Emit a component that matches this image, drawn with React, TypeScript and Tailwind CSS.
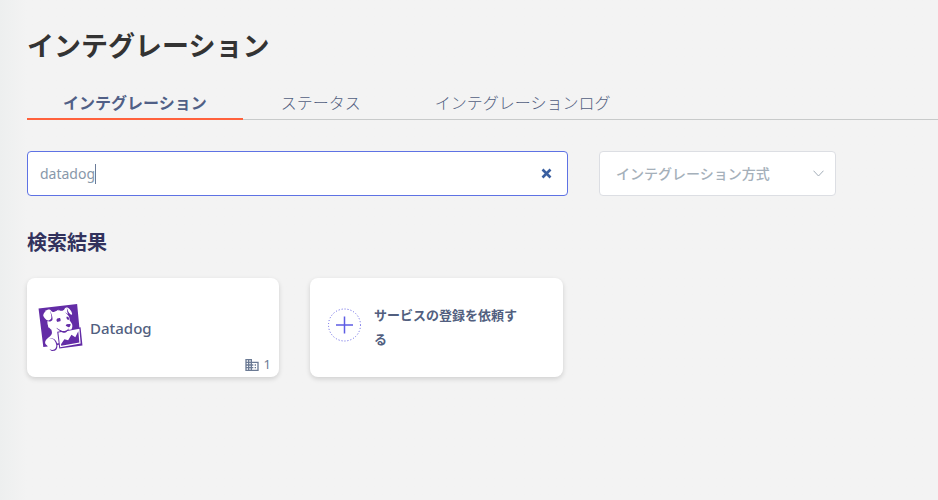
import React, { useState } from 'react';
import { SiDatadog } from 'react-icons/si';
import { MdBusiness } from 'react-icons/md';

const tabs = ['インテグレーション', 'ステータス', 'インテグレーションログ'];

const TabBar: React.FC = () => {
  const [active, setActive] = useState(0);

  return (
    <div role="tablist" className="mt-6 flex gap-0.5 border-b border-[#c8caca]">
      {tabs.map((tab, idx) => (
        <button
          key={tab}
          role="tab"
          aria-selected={idx === active}
          onClick={() => setActive(idx)}
          className={
            idx === active
              ? '-mb-px h-8 border-b-2 border-[#ff613c] px-9 text-base leading-6 font-bold text-[#505f86]'
              : '-mb-px h-8 border-b-2 border-transparent px-9 text-base leading-6 font-light text-[#525f7f]'
          }
        >
          {tab}
        </button>
      ))}
    </div>
  );
};

const SearchBox: React.FC = () => {
  const [query, setQuery] = useState('datadog');

  return (
    <div className="relative w-[541px]">
      <input
        type="text"
        aria-label="検索"
        value={query}
        onChange={(e) => setQuery(e.target.value)}
        className="h-[45px] w-full rounded border border-[#5e72e4] bg-white px-3 text-sm text-[#8898aa] caret-transparent outline-none"
      />
      {/* caret sits right after the typed text */}
      <div aria-hidden="true" className="pointer-events-none absolute inset-y-0 left-[13px] flex items-center">
        <span className="invisible text-sm whitespace-pre">{query}</span>
        <span className="h-5 w-px bg-[#6b7c99]" />
      </div>
      <button
        aria-label="クリア"
        onClick={() => setQuery('')}
        className="absolute inset-y-0 right-4 flex items-center text-[#3a5fa0]"
      >
        <svg width="11" height="11" viewBox="0 0 11 11" fill="none" stroke="currentColor" strokeWidth="2.6">
          <path d="M1.5 1.5 9.5 9.5M9.5 1.5 1.5 9.5" />
        </svg>
      </button>
    </div>
  );
};

const MethodSelect: React.FC = () => (
  <div className="relative w-[237px]">
    <select
      aria-label="インテグレーション方式"
      className="h-[45px] w-full appearance-none rounded border border-[#dcdee3] bg-white pr-8 pl-4 text-sm font-medium text-[#a5b0ba] outline-none"
    >
      <option>インテグレーション方式</option>
    </select>
    <svg
      className="pointer-events-none absolute top-[19px] right-3 text-[#a3adb8]"
      width="11"
      height="7"
      viewBox="0 0 11 7"
      fill="none"
      stroke="currentColor"
    >
      <path d="M.5.7 5.5 6 10.5.7" />
    </svg>
  </div>
);

export default function App() {
  return (
    <div className="min-h-screen bg-[#f3f3f3] bg-linear-to-r from-[#edefef] to-[#f3f3f3] to-[27px] pt-7 pl-[27px] font-['Noto_Sans','Noto_Sans_CJK_JP',sans-serif]">
      <h1 className="text-[27px] leading-9 font-bold text-[#333333]">インテグレーション</h1>
      <TabBar />

      <div className="mt-[31px] flex gap-[31px]">
        <SearchBox />
        <MethodSelect />
      </div>

      <h2 className="mt-8 text-xl leading-[30px] font-bold text-[#32325d]">検索結果</h2>

      <div className="mt-5 flex gap-[31px]">
        <a href="#datadog" className="flex h-[99px] w-[252px] flex-col rounded-lg bg-white pr-2 pl-2.5 shadow-[0_2px_5px_rgba(0,0,0,0.15)]">
          <div className="flex grow items-center gap-1.5 pt-6">
            <SiDatadog className="size-[47px] text-[#632ca6]" />
            <span className="text-[15px] leading-6 font-medium text-[#525f7f]">Datadog</span>
          </div>
          <div className="flex h-6 items-center justify-end gap-1 text-[13px] text-[#6b7a94]">
            <MdBusiness className="size-4" />
            <span>1</span>
          </div>
        </a>

        <button className="flex h-[99px] w-[253px] items-center gap-3 rounded-lg bg-white pr-9 pb-0.5 pl-[17px] text-left shadow-[0_2px_5px_rgba(0,0,0,0.15)]">
          <svg className="-mt-1 shrink-0" width="35" height="34" viewBox="0 0 35 34" fill="none" stroke="#5e5ce4">
            <circle cx="17.5" cy="17" r="16" strokeDasharray="1 2" />
            <path d="M17.5 8.5V25.5M9 17H26" strokeWidth="1.5" />
          </svg>
          <span className="text-[13px] leading-6 font-bold text-[#525f7f]">サービスの登録を依頼する</span>
        </button>
      </div>
    </div>
  );
}
